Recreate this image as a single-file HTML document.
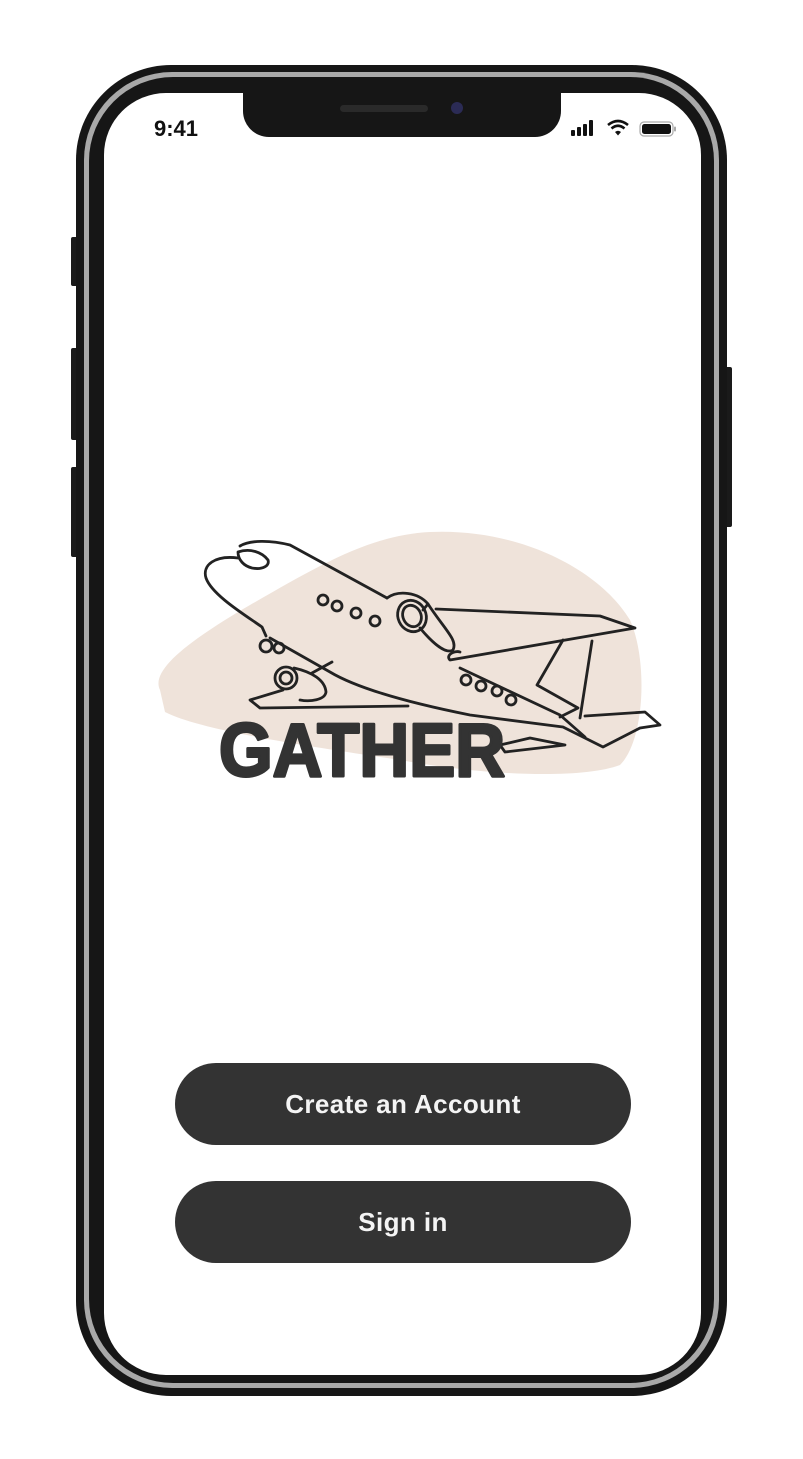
<!DOCTYPE html>
<html><head><meta charset="utf-8"><style>
html,body{margin:0;padding:0;background:#fff;width:803px;height:1459px;overflow:hidden;position:relative;font-family:"Liberation Sans",sans-serif}
.abs{position:absolute}
.btn{position:absolute;left:175px;width:456px;height:82px;border-radius:41px;background:#333;color:#f4f4f4;font-size:26px;font-weight:bold;display:flex;align-items:center;justify-content:center;letter-spacing:0.4px}
</style></head><body>
<div class="abs" style="left:71px;top:237px;width:8px;height:49px;background:#1a1a1a;border-radius:2px"></div>
<div class="abs" style="left:71px;top:348px;width:8px;height:92px;background:#1a1a1a;border-radius:2px"></div>
<div class="abs" style="left:71px;top:467px;width:8px;height:90px;background:#1a1a1a;border-radius:2px"></div>
<div class="abs" style="left:724px;top:367px;width:8px;height:160px;background:#1a1a1a;border-radius:2px"></div>
<div class="abs" style="left:76px;top:65px;width:651px;height:1331px;background:#161616;border-radius:95px"></div>
<div class="abs" style="left:84px;top:72px;width:635px;height:1316px;background:#a9a9a9;border-radius:88px"></div>
<div class="abs" style="left:89px;top:77px;width:625px;height:1306px;background:#161616;border-radius:84px"></div>
<div class="abs" style="left:104px;top:93px;width:597px;height:1282px;background:#fff;border-radius:62px"></div>
<div class="abs" style="left:243px;top:86px;width:318px;height:51px;background:#161616;border-radius:0 0 26px 26px"></div>
<div class="abs" style="left:340px;top:105px;width:88px;height:7px;background:#2a2a2a;border-radius:4px"></div>
<div class="abs" style="left:451px;top:102px;width:12px;height:12px;background:#2b2b55;border-radius:50%"></div>
<div class="abs" style="left:154px;top:116px;font-size:22px;font-weight:bold;color:#111">9:41</div>
<svg class="abs" style="left:570px;top:118px" width="110" height="22" viewBox="0 0 110 22">
<rect x="1" y="12" width="4" height="6" rx="1" fill="#111"/><rect x="7" y="9" width="4" height="9" rx="1" fill="#111"/><rect x="13" y="6" width="4" height="12" rx="1" fill="#111"/><rect x="19" y="2" width="4" height="16" rx="1" fill="#111"/>
<path d="M38 7 Q48 -1 58 7" stroke="#111" stroke-width="2.6" fill="none"/><path d="M41.5 10.5 Q48 5 54.5 10.5" stroke="#111" stroke-width="2.6" fill="none"/><path d="M45 14 L48 17.5 L51 14 Q48 11.5 45 14Z" fill="#111"/>
<rect x="70" y="4" width="33" height="14" rx="4" fill="#fff" stroke="#aaa" stroke-width="1.2"/><rect x="72" y="6" width="29" height="10" rx="2.5" fill="#111"/><rect x="104" y="8.5" width="2" height="5" rx="1" fill="#aaa"/>
</svg>
<svg class="abs" style="left:0;top:0" width="803" height="900" viewBox="0 0 803 900">
<path d="M160 690 C 150 670 190 640 250 605 C 320 565 370 535 430 532 C 520 528 600 570 630 620 C 648 660 645 740 620 765 C 580 780 480 775 400 760 C 300 745 200 730 165 712 Z" fill="#efe3da"/>
<g stroke="#222" stroke-width="2.8" fill="none" stroke-linecap="round" stroke-linejoin="round">
<path d="M240 546 C 250 540 270 540 290 545 L 387 598"/>
<path d="M238 552 C 250 548 262 552 268 560 C 270 566 262 570 252 568 C 244 566 238 560 238 552Z"/>
<path d="M238 558 C 215 555 202 565 206 578 C 212 595 245 615 262 627 L 266 636"/>
<circle cx="266" cy="646" r="6"/><circle cx="279" cy="648" r="5"/>
<path d="M270 638 L 330 672 C 360 690 420 705 470 715 L 563 727 L 603 747 L 640 728 L 660 725 L 645 712 L 585 716"/>
<path d="M387 598 C 398 590 418 592 428 604 L 423 610"/>
<ellipse cx="412" cy="616" rx="14" ry="16" transform="rotate(-25 412 616)"/>
<ellipse cx="412" cy="616" rx="9" ry="11" transform="rotate(-25 412 616)"/>
<path d="M420 628 C 430 640 445 655 453 650 C 458 640 445 630 428 604"/>
<path d="M436 609 L 600 616 L 635 628 L 450 660 C 445 655 455 650 460 652"/>
<path d="M563 640 L 537 685 L 578 708 L 560 717"/>
<path d="M592 641 L 580 718"/>
<path d="M460 668 L 560 715 L 585 737"/>
<circle cx="323" cy="600" r="5"/><circle cx="337" cy="606" r="5"/><circle cx="356" cy="613" r="5"/><circle cx="375" cy="621" r="5"/>
<circle cx="466" cy="680" r="5"/><circle cx="481" cy="686" r="5"/><circle cx="497" cy="691" r="5"/><circle cx="511" cy="700" r="5"/>
<circle cx="286" cy="678" r="11"/><circle cx="286" cy="678" r="6"/>
<path d="M294 668 C 312 672 325 680 326 692 C 325 700 310 702 300 700"/>
<path d="M312 673 L 332 662"/>
<path d="M283 690 L 250 700 L 260 708 L 408 706"/>
<path d="M500 745 L 530 738 L 565 745 L 505 752 Z"/>
</g>
<text x="219" y="776" font-family="Liberation Sans, sans-serif" font-weight="bold" font-size="75" fill="#333" textLength="286" lengthAdjust="spacingAndGlyphs" stroke="#333" stroke-width="3" stroke-linejoin="round">GATHER</text>
</svg>
<div class="btn" style="top:1063px">Create an Account</div>
<div class="btn" style="top:1181px">Sign in</div>
</body></html>
